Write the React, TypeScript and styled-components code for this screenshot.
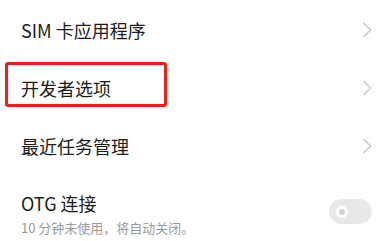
import React from "react";
import styled, { createGlobalStyle } from "styled-components";

const Global = createGlobalStyle`
  html, body { margin: 0; padding: 0; background: #ffffff; }
  body { font-family: "Noto Sans CJK SC", "Noto Sans", sans-serif; -webkit-font-smoothing: antialiased; }
`;

const List = styled.div`
  display: flex;
  flex-direction: column;
  width: 384px;
  height: 241px;
  overflow: hidden;
  background: #fff;
`;

const Row = styled.div<{ $h: number; $top?: number }>`
  position: relative;
  display: flex;
  align-items: ${(p) => (p.$top !== undefined ? "flex-start" : "center")};
  justify-content: space-between;
  height: ${(p) => p.$h}px;
  padding: ${(p) => p.$top ?? 0}px 12px 0 21px;
  box-sizing: border-box;
  flex-shrink: 0;
`;

const TextCol = styled.div`
  display: flex;
  flex-direction: column;
  gap: 5px;
`;

const Title = styled.div`
  font-size: 18px;
  line-height: 22px;
  color: #1c1c1c;
  white-space: nowrap;
`;

const Sub = styled.div`
  font-size: 13px;
  line-height: 18px;
  color: #9a9a9a;
  white-space: nowrap;
`;

const Highlight = styled.div`
  position: absolute;
  left: 5px;
  top: 3px;
  width: 162px;
  height: 45px;
  border: 3px solid #fa1a14;
  border-radius: 3px;
  box-sizing: border-box;
  pointer-events: none;
`;

const Switch = styled.div`
  width: 43px;
  height: 25px;
  border-radius: 13px;
  background: #e8e8e8;
  display: flex;
  align-items: center;
  padding-left: 7px;
  box-sizing: border-box;
  margin-top: 7px;
`;

const Knob = styled.div`
  width: 12px;
  height: 12px;
  border-radius: 50%;
  background: #d2d2d2;
  border: 3px solid #ffffff;
  box-sizing: border-box;
`;

const Chevron = () => (
  <svg width="10" height="16" viewBox="0 0 10 16">
    <path d="M1.5 1 L8.5 8 L1.5 15" fill="none" stroke="#c2c2c2" strokeWidth="1.2" />
  </svg>
);

export default function App() {
  return (
    <>
      <Global />
      <List>
        <Row $h={59}>
          <Title>SIM 卡应用程序</Title>
          <Chevron />
        </Row>
        <Row $h={57}>
          <Highlight />
          <Title>开发者选项</Title>
          <Chevron />
        </Row>
        <Row $h={59}>
          <Title>最近任务管理</Title>
          <Chevron />
        </Row>
        <Row $h={66} $top={17}>
          <TextCol>
            <Title>OTG 连接</Title>
            <Sub>10 分钟未使用，将自动关闭。</Sub>
          </TextCol>
          <Switch>
            <Knob />
          </Switch>
        </Row>
      </List>
    </>
  );
}
